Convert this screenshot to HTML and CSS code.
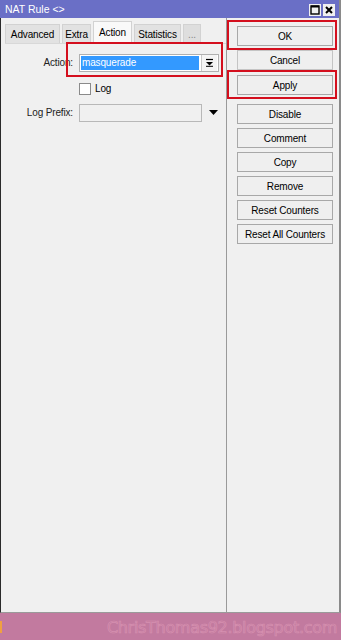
FILE: index.html
```html
<!DOCTYPE html>
<html>
<head>
<meta charset="utf-8">
<link rel="stylesheet" href="styles.css">
</head>
<body>
<div class="window">
  <div class="titlebar">
    <span class="title">NAT Rule &lt;&gt;</span>
    <div class="winbtns">
      <span class="wbtn"><svg width="10" height="10" viewBox="0 0 10 10"><rect x="1" y="1" width="8" height="8" fill="none" stroke="#000" stroke-width="1.4"/><line x1="1" y1="1.5" x2="9" y2="1.5" stroke="#000" stroke-width="2"/></svg></span>
      <span class="wbtn"><svg width="10" height="10" viewBox="0 0 10 10"><path d="M2 2 L8 8 M8 2 L2 8" stroke="#000" stroke-width="2"/></svg></span>
    </div>
  </div>
  <div class="content">
    <div class="left">
      <div class="tabs">
        <span class="tab t-adv">Advanced</span>
        <span class="tab t-extra">Extra</span>
        <span class="tab active">Action</span>
        <span class="tab t-stat">Statistics</span>
        <span class="tab more">...</span>
      </div>
      <div class="form">
        <div class="row">
          <span class="label">Action:</span>
          <div class="select">
            <span class="sel-text">masquerade</span>
            <span class="sel-btn"><svg width="9" height="9" viewBox="0 0 9 9"><line x1="1" y1="1.5" x2="8" y2="1.5" stroke="#000" stroke-width="1.2"/><path d="M1 4 L8 4 L4.5 7.5 Z" fill="#000"/><line x1="1" y1="8.3" x2="8" y2="8.3" stroke="#000" stroke-width="1"/></svg></span>
          </div>
        </div>
        <div class="row check-row">
          <span class="label"></span>
          <span class="checkbox"></span>
          <span class="check-label">Log</span>
        </div>
        <div class="row">
          <span class="label">Log Prefix:</span>
          <div class="input"></div>
          <span class="arrow"><svg width="9" height="6" viewBox="0 0 9 6"><path d="M0 0 L9 0 L4.5 5 Z" fill="#000"/></svg></span>
        </div>
        <div class="mark mark-action"></div>
      </div>
    </div>
    <div class="right">
      <div class="marked m-ok"><button class="btn">OK</button></div>
      <button class="btn b-cancel">Cancel</button>
      <div class="marked m-apply"><button class="btn">Apply</button></div>
      <button class="btn b-disable">Disable</button>
      <button class="btn">Comment</button>
      <button class="btn">Copy</button>
      <button class="btn">Remove</button>
      <button class="btn">Reset Counters</button>
      <button class="btn">Reset All Counters</button>
    </div>
  </div>
</div>
<div class="footer">
  <span class="orange"></span>
  <span class="watermark">ChrisThomas92.blogspot.com</span>
</div>
</body>
</html>
```
FILE: styles.css
```css
* { box-sizing: border-box; }
html, body { margin: 0; padding: 0; }
body {
  width: 341px;
  height: 640px;
  overflow: hidden;
  font-family: "Liberation Sans", Arial, sans-serif;
  font-size: 10px;
  letter-spacing: -0.15px;
  color: #000;
  background: #c27a9f;
}
.window {
  height: 613px;
  display: flex;
  flex-direction: column;
  background: #f0f0f0;
  border-left: 1px solid #2a2a2a;
  border-right: 2px solid #8a8a8a;
  border-bottom: 1px solid #9a9a9a;
}
.titlebar {
  height: 18px;
  background: #6a6fc6;
  display: flex;
  align-items: center;
  justify-content: space-between;
  padding: 0 4px 0 5px;
  margin-left: -1px;
  color: #fff;
  font-size: 10.5px;
  letter-spacing: 0;
}
.winbtns { display: flex; gap: 2px; margin-top: 2px; }
.wbtn {
  width: 12px;
  height: 12px;
  background: #f0f0f0;
  display: flex;
  align-items: center;
  justify-content: center;
}
.content {
  flex: 1;
  display: flex;
}
.left {
  width: 226px;
  border-right: 1px solid #9a9a9a;
  padding: 4px 0 0 4px;
}
.tabs {
  display: flex;
  gap: 2px;
  align-items: flex-end;
  height: 22px;
  border-bottom: 1px solid #d8d8d8;
}
.tab {
  height: 19px;
  display: flex;
  align-items: center;
  justify-content: center;
  background: #e2e2e2;
  border: 1px solid #d2d2d2;
  border-bottom: none;
}
.t-adv { width: 55px; }
.t-extra { width: 29px; }
.tab.active {
  width: 39px;
  height: 22px;
  background: #f9f9f9;
  padding-bottom: 1px;
}
.t-stat { width: 47px; }
.tab.more { width: 18px; color: #888; background: #dedede; }
.form {
  position: relative;
  padding-top: 9px;
}
.row {
  display: flex;
  align-items: center;
  height: 19px;
  margin-bottom: 4px;
}
.label {
  width: 71px;
  text-align: right;
  padding-right: 3px;
  color: #222;
}
.select {
  width: 140px;
  height: 18px;
  margin-left: 3px;
  background: #fff;
  border: 1px solid #b0b0b0;
  display: flex;
  align-items: center;
  padding: 1px;
}
.sel-text {
  flex: 1;
  height: 14px;
  background: #3399ff;
  color: #fff;
  padding-left: 1px;
  line-height: 14px;
}
.sel-btn {
  width: 16px;
  height: 16px;
  margin-left: 2px;
  background: #f4f4f4;
  border-left: 1px solid #c8c8c8;
  display: flex;
  align-items: center;
  justify-content: center;
}
.check-row { margin-top: 7px; margin-bottom: 5px; }
.checkbox {
  width: 12px;
  height: 12px;
  margin-left: 3px;
  background: #fff;
  border: 1px solid #8a8a8a;
}
.check-label { margin-left: 4px; }
.input {
  width: 123px;
  height: 18px;
  margin-left: 3px;
  background: #f0f0f0;
  border: 1px solid #b8b8b8;
}
.arrow { margin-left: 7px; display: flex; }
.mark {
  position: absolute;
  border: 2px solid #d40f1e;
  pointer-events: none;
}
.mark-action {
  left: 61px;
  top: -2px;
  width: 157px;
  height: 35px;
}
.right {
  flex: 1;
  display: flex;
  flex-direction: column;
  align-items: flex-start;
  padding-top: 2px;
}
.marked {
  width: 110px;
  border: 2px solid #d40f1e;
  padding: 4px 0 2px 8px;
  display: flex;
}
.m-apply { padding-top: 3px; }
.btn {
  width: 96px;
  height: 20px;
  padding: 0;
  margin: 4px 0 0 10px;
  font-family: "Liberation Sans", Arial, sans-serif;
  font-size: 10px;
  letter-spacing: -0.15px;
  color: #000;
  background: #efefef;
  border: 1px solid #a8a8a8;
  border-radius: 0;
}
.marked .btn { margin: 0; }
.b-cancel { margin-top: 0; border-color: #c4c4c4; }
.b-disable { margin-top: 5px; }
.footer {
  height: 27px;
  display: flex;
  align-items: center;
  justify-content: space-between;
  background: #c27a9f;
}
.orange {
  width: 2px;
  height: 12px;
  background: #f0a040;
}
.watermark {
  font-family: "DejaVu Sans", sans-serif;
  font-size: 16px;
  letter-spacing: -0.3px;
  color: #c47c9f;
  -webkit-text-stroke: 0.7px #d690b0;
  padding-right: 4px;
  margin-top: 2px;
}
```
